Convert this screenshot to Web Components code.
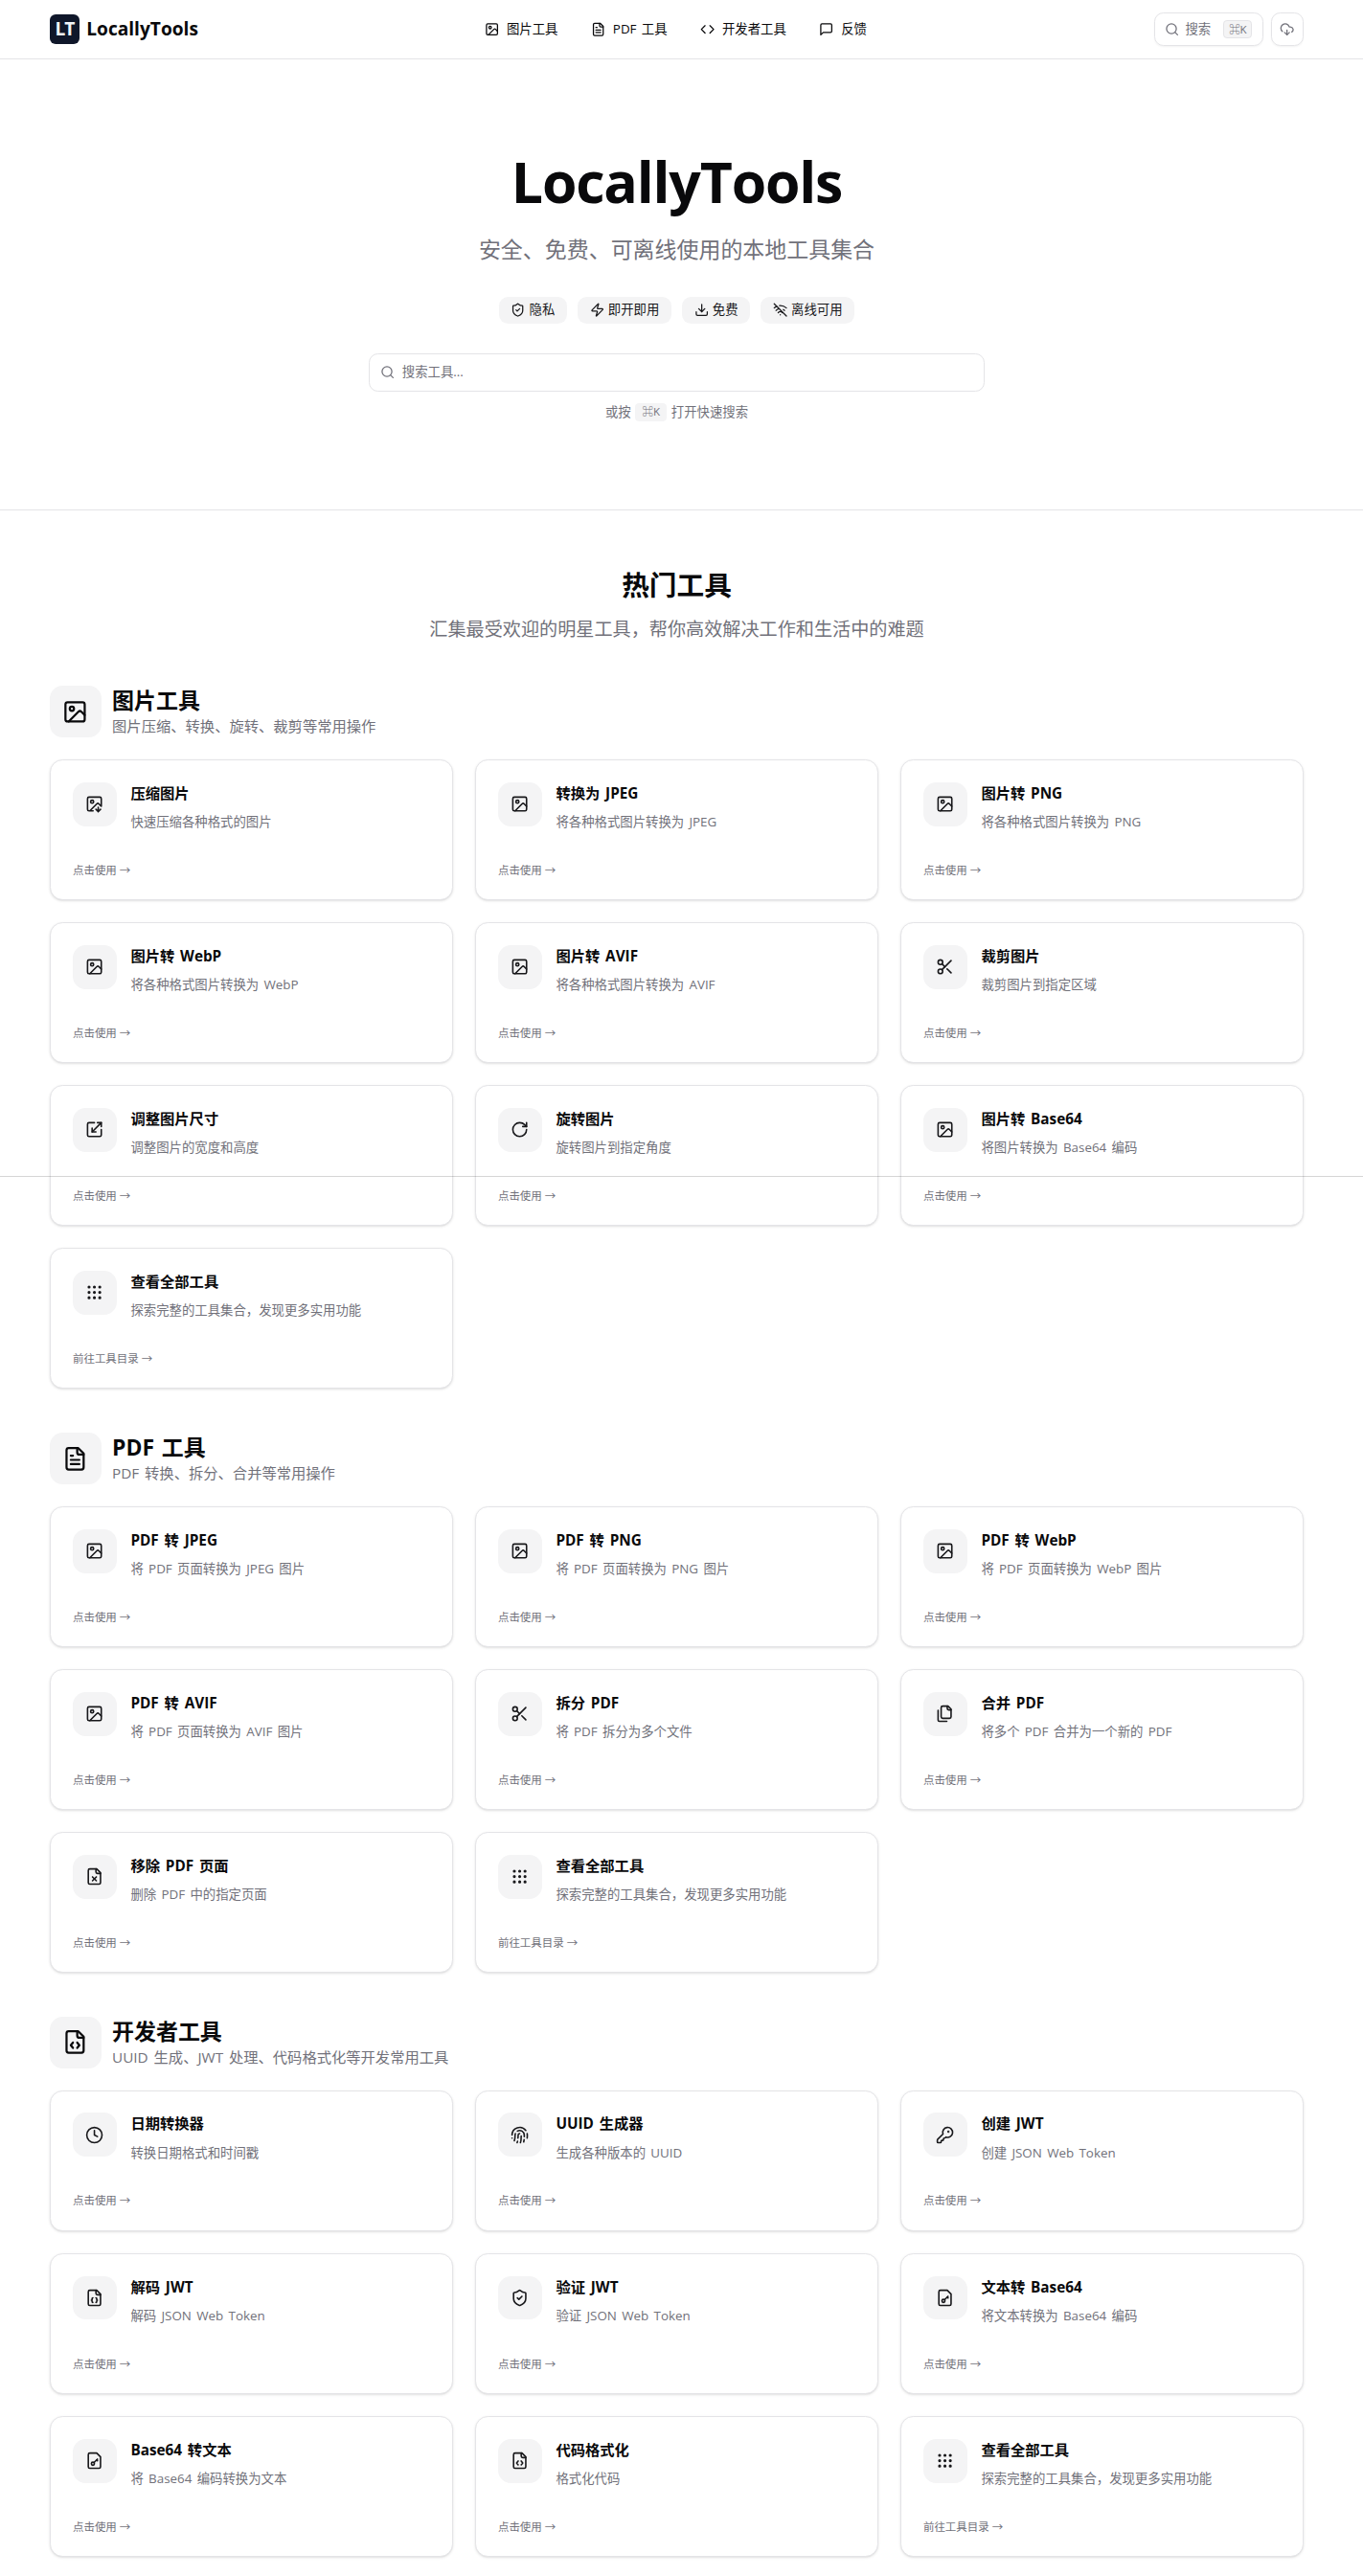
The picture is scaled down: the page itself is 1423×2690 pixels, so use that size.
<!DOCTYPE html>
<html lang="zh-CN">
<head>
<meta charset="utf-8">
<title>LocallyTools</title>
<style>
    html { font-size: 15.31px; }
    body {
        margin: 0;
        position: relative;
        background: #fff;
        color: #09090b;
        font-family: "Open Sans", "Noto Sans CJK SC", sans-serif;
        line-height: 1.5;
        word-spacing: .12em;
        --border: #e4e4e7;
        --muted: #f4f4f5;
        --muted-text: #71717a;
        --gutter: 10px;
    }
</style>
</head>
<body>
<site-header></site-header>
<site-hero></site-hero>
<tool-sections></tool-sections>
<seam-line></seam-line>

<script>
const FILE = '<path d="M15 2H6a2 2 0 0 0-2 2v16a2 2 0 0 0 2 2h12a2 2 0 0 0 2-2V7Z"/>'
const FOLD = '<path d="M14 2v4a2 2 0 0 0 2 2h4"/>'

const ICONS = {
    image: '<rect width="18" height="18" x="3" y="3" rx="2"/><circle cx="9" cy="9" r="2"/><path d="m21 15-3.086-3.086a2 2 0 0 0-2.828 0L6 21"/>',
    imageDown: '<path d="M10.3 21H5a2 2 0 0 1-2-2V5a2 2 0 0 1 2-2h14a2 2 0 0 1 2 2v10l-3.1-3.1a2 2 0 0 0-2.814.014L6 21"/><path d="m14 19 3 3v-5.5"/><path d="m17 22 3-3"/><circle cx="9" cy="9" r="2"/>',
    fileText: FILE + FOLD + '<path d="M10 9H8"/><path d="M16 13H8"/><path d="M16 17H8"/>',
    code: '<path d="m16 18 6-6-6-6"/><path d="m8 6-6 6 6 6"/>',
    message: '<path d="M21 15a2 2 0 0 1-2 2H7l-4 4V5a2 2 0 0 1 2-2h14a2 2 0 0 1 2 2z"/>',
    search: '<circle cx="11" cy="11" r="8"/><path d="m21 21-4.3-4.3"/>',
    cloud: '<path d="M12 13v8l-4-4"/><path d="m12 21 4-4"/><path d="M4.393 15.269A7 7 0 1 1 15.71 8h1.79a4.5 4.5 0 0 1 2.436 8.284"/>',
    shield: '<path d="M20 13c0 5-3.5 7.5-7.66 8.95a1 1 0 0 1-.67-.01C7.5 20.5 4 18 4 13V6a1 1 0 0 1 1-1c2 0 4.5-1.2 6.24-2.72a1.17 1.17 0 0 1 1.52 0C14.51 3.81 17 5 19 5a1 1 0 0 1 1 1z"/><path d="m9 12 2 2 4-4"/>',
    zap: '<path d="M4 14a1 1 0 0 1-.78-1.63l9.9-10.2a.5.5 0 0 1 .86.46l-1.92 6.02A1 1 0 0 0 13 10h7a1 1 0 0 1 .78 1.63l-9.9 10.2a.5.5 0 0 1-.86-.46l1.92-6.02A1 1 0 0 0 11 14z"/>',
    download: '<path d="M21 15v4a2 2 0 0 1-2 2H5a2 2 0 0 1-2-2v-4"/><path d="m7 10 5 5 5-5"/><path d="M12 15V3"/>',
    wifiOff: '<path d="M12 20h.01"/><path d="M8.5 16.429a5 5 0 0 1 7 0"/><path d="M5 12.859a10 10 0 0 1 5.17-2.69"/><path d="M19 12.859a10 10 0 0 0-2.007-1.523"/><path d="M2 8.82a15 15 0 0 1 4.177-2.643"/><path d="M22 8.82a15 15 0 0 0-11.288-3.764"/><path d="m2 2 20 20"/>',
    scissors: '<circle cx="6" cy="6" r="3"/><path d="M8.12 8.12 12 12"/><path d="M20 4 8.12 15.88"/><circle cx="6" cy="18" r="3"/><path d="M14.8 14.8 20 20"/>',
    scaling: '<path d="M12 3H5a2 2 0 0 0-2 2v14a2 2 0 0 0 2 2h14a2 2 0 0 0 2-2v-7"/><path d="M14 15H9v-5"/><path d="M16 3h5v5"/><path d="M21 3 9 15"/>',
    rotate: '<path d="M21 12a9 9 0 1 1-9-9c2.52 0 4.93 1 6.74 2.74L21 8"/><path d="M21 3v5h-5"/>',
    grip: [5, 12, 19].map(y => [5, 12, 19].map(x => `<circle cx="${x}" cy="${y}" r="1"/>`).join('')).join(''),
    files: '<path d="M20 7h-3a2 2 0 0 1-2-2V2"/><path d="M9 18a2 2 0 0 1-2-2V4a2 2 0 0 1 2-2h7l4 4v10a2 2 0 0 1-2 2Z"/><path d="M3 7.6v12.8A1.6 1.6 0 0 0 4.6 22h9.8"/>',
    fileX: FILE + FOLD + '<path d="m14.5 12.5-5 5"/><path d="m9.5 12.5 5 5"/>',
    fileCode: FILE + FOLD + '<path d="M10 12.5 8 15l2 2.5"/><path d="m14 12.5 2 2.5-2 2.5"/>',
    fileJson: FILE + FOLD + '<path d="M10 12a1 1 0 0 0-1 1v1a1 1 0 0 1-1 1 1 1 0 0 1 1 1v1a1 1 0 0 0 1 1"/><path d="M14 18a1 1 0 0 0 1-1v-1a1 1 0 0 1 1-1 1 1 0 0 1-1-1v-1a1 1 0 0 0-1-1"/>',
    fileKey: FILE + '<circle cx="10" cy="16" r="2"/><path d="m16 10-4.5 4.5"/><path d="m15 11 1 1"/>',
    clock: '<circle cx="12" cy="12" r="10"/><path d="M12 6v6l4 2"/>',
    fingerprint: '<path d="M12 10a2 2 0 0 0-2 2c0 1.02-.1 2.51-.26 4"/><path d="M14 13.12c0 2.38 0 6.38-1 8.88"/><path d="M17.29 21.02c.12-.6.43-2.3.5-3.02"/><path d="M2 12a10 10 0 0 1 18-6"/><path d="M2 16h.01"/><path d="M21.8 16c.2-2 .131-5.354 0-6"/><path d="M5 19.5C5.5 18 6 15 6 12a6 6 0 0 1 .34-2"/><path d="M8.65 22c.21-.66.45-1.32.57-2"/><path d="M9 6.8a6 6 0 0 1 9 5.2v2"/>',
    key: '<path d="M2.586 17.414A2 2 0 0 0 2 18.828V21a1 1 0 0 0 1 1h3a1 1 0 0 0 1-1v-1a1 1 0 0 1 1-1h1a1 1 0 0 0 1-1v-1a1 1 0 0 1 1-1h.172a2 2 0 0 0 1.414-.586l.814-.814a6.5 6.5 0 1 0-4-4z"/><circle cx="16.5" cy="7.5" r=".5" fill="currentColor"/>'
}

const SECTIONS = [
    {
        icon: 'image', title: '图片工具', text: '图片压缩、转换、旋转、裁剪等常用操作',
        tools: [
            ['imageDown', '压缩图片', '快速压缩各种格式的图片'],
            ['image', '转换为 JPEG', '将各种格式图片转换为 JPEG'],
            ['image', '图片转 PNG', '将各种格式图片转换为 PNG'],
            ['image', '图片转 WebP', '将各种格式图片转换为 WebP'],
            ['image', '图片转 AVIF', '将各种格式图片转换为 AVIF'],
            ['scissors', '裁剪图片', '裁剪图片到指定区域'],
            ['scaling', '调整图片尺寸', '调整图片的宽度和高度'],
            ['rotate', '旋转图片', '旋转图片到指定角度'],
            ['image', '图片转 Base64', '将图片转换为 Base64 编码']
        ]
    },
    {
        icon: 'fileText', title: 'PDF 工具', text: 'PDF 转换、拆分、合并等常用操作',
        tools: [
            ['image', 'PDF 转 JPEG', '将 PDF 页面转换为 JPEG 图片'],
            ['image', 'PDF 转 PNG', '将 PDF 页面转换为 PNG 图片'],
            ['image', 'PDF 转 WebP', '将 PDF 页面转换为 WebP 图片'],
            ['image', 'PDF 转 AVIF', '将 PDF 页面转换为 AVIF 图片'],
            ['scissors', '拆分 PDF', '将 PDF 拆分为多个文件'],
            ['files', '合并 PDF', '将多个 PDF 合并为一个新的 PDF'],
            ['fileX', '移除 PDF 页面', '删除 PDF 中的指定页面']
        ]
    },
    {
        icon: 'fileCode', title: '开发者工具', text: 'UUID 生成、JWT 处理、代码格式化等开发常用工具',
        tools: [
            ['clock', '日期转换器', '转换日期格式和时间戳'],
            ['fingerprint', 'UUID 生成器', '生成各种版本的 UUID'],
            ['key', '创建 JWT', '创建 JSON Web Token'],
            ['fileJson', '解码 JWT', '解码 JSON Web Token'],
            ['shield', '验证 JWT', '验证 JSON Web Token'],
            ['fileKey', '文本转 Base64', '将文本转换为 Base64 编码'],
            ['fileKey', 'Base64 转文本', '将 Base64 编码转换为文本'],
            ['fileCode', '代码格式化', '格式化代码']
        ]
    }
]

// Base class: puts the element's template in an open shadow root
class BaseElement extends HTMLElement {
    connectedCallback() {
        if(this.shadowRoot) return;
        this.attachShadow({ mode: 'open' });
        const template = document.createElement('template');
        template.innerHTML = this.render();
        this.shadowRoot.appendChild(template.content);
    }
}

class AppIcon extends BaseElement {
    render() {
        return `
            <style>
                :host { display: block; flex: none; width: 1rem; height: 1rem; }
                svg { display: block; width: 100%; height: 100%; }
            </style>
            <svg viewBox="0 0 24 24" fill="none" stroke="currentColor" stroke-width="2" stroke-linecap="round" stroke-linejoin="round">${ICONS[this.getAttribute('name')]}</svg>`;
    }
}

class KeyHint extends BaseElement {
    render() {
        return `
            <style>
                :host {
                    display: inline-flex;
                    align-items: center;
                    justify-content: center;
                    box-sizing: border-box;
                    height: 1.25rem;
                    padding: 0 .3125rem;
                    border: 1px solid var(--kbd-border, var(--border));
                    border-radius: .25rem;
                    background: var(--muted);
                    color: var(--muted-text);
                    font-size: .75rem;
                    line-height: 1;
                }
            </style>
            <slot></slot>`;
    }
}

class NavLink extends BaseElement {
    render() {
        return `
            <style>
                :host {
                    display: flex;
                    align-items: center;
                    gap: .5rem;
                    font-size: .875rem;
                    line-height: 1.25rem;
                    white-space: nowrap;
                }
            </style>
            <app-icon name="${this.getAttribute('icon')}"></app-icon>
            <span><slot></slot></span>`;
    }
}

class SiteHeader extends BaseElement {
    render() {
        return `
            <style>
                :host {
                    display: block;
                    border-bottom: 1px solid var(--border);
                    padding-right: var(--gutter);
                }
                .bar {
                    display: grid;
                    grid-template-columns: 1fr auto 1fr;
                    align-items: center;
                    width: 1309px;
                    height: 61px;
                    margin: 0 auto;
                }
                .brand { display: flex; align-items: center; gap: .5rem; }
                .mark {
                    display: grid;
                    place-items: center;
                    width: 2rem;
                    height: 2rem;
                    border-radius: .4rem;
                    background: #0f172a;
                    color: #f1f5f9;
                    font-size: 1.25rem;
                    font-weight: 700;
                    line-height: 1;
                    letter-spacing: -.06em;
                }
                .name { font-size: 1.25rem; line-height: 1.75rem; font-weight: 700; }
                nav { display: flex; gap: 2.25rem; margin-right: 2px; }
                .actions { display: flex; justify-content: flex-end; gap: .5rem; color: var(--muted-text); }
                .button {
                    display: flex;
                    align-items: center;
                    justify-content: center;
                    box-sizing: border-box;
                    width: 2.25rem;
                    height: 2.25rem;
                    border: 1px solid var(--border);
                    border-radius: .625rem;
                    box-shadow: 0 1px 2px rgba(0, 0, 0, .05);
                    font-size: .875rem;
                }
                .search { width: 114px; justify-content: flex-start; gap: .375rem; padding: 0 .6875rem; }
                key-hint { margin-left: auto; }
            </style>
            <div class="bar">
                <div class="brand">
                    <span class="mark">LT</span>
                    <span class="name">LocallyTools</span>
                </div>
                <nav>
                    <nav-link icon="image">图片工具</nav-link>
                    <nav-link icon="fileText">PDF 工具</nav-link>
                    <nav-link icon="code">开发者工具</nav-link>
                    <nav-link icon="message">反馈</nav-link>
                </nav>
                <div class="actions">
                    <div class="button search">
                        <app-icon name="search"></app-icon>
                        <span>搜索</span>
                        <key-hint>⌘K</key-hint>
                    </div>
                    <div class="button"><app-icon name="cloud"></app-icon></div>
                </div>
            </div>`;
    }
}

class FeatureBadge extends BaseElement {
    render() {
        return `
            <style>
                :host {
                    display: flex;
                    align-items: center;
                    box-sizing: border-box;
                    gap: .25rem;
                    height: 1.875rem;
                    padding: 0 .8125rem;
                    border-radius: .625rem;
                    background: var(--muted);
                    color: #18181b;
                    font-size: .875rem;
                    line-height: 1.25rem;
                }
            </style>
            <app-icon name="${this.getAttribute('icon')}"></app-icon>
            <span><slot></slot></span>`;
    }
}

class SiteHero extends BaseElement {
    render() {
        return `
            <style>
                :host {
                    display: flex;
                    flex-direction: column;
                    align-items: center;
                    padding: 93px var(--gutter) 6rem 0;
                    border-bottom: 1px solid var(--border);
                    color: var(--muted-text);
                    font-size: .875rem;
                    line-height: 1.25rem;
                }
                h1 {
                    margin: 0 0 1.4rem;
                    color: #09090b;
                    font-size: 3.85rem;
                    line-height: 4.5rem;
                    font-weight: 700;
                    letter-spacing: -.02em;
                }
                p { margin: 0; font-size: 1.5rem; line-height: 2rem; }
                .badges { display: flex; gap: .75rem; margin: 2.2rem 0 2rem; }
                .field {
                    display: flex;
                    align-items: center;
                    gap: .46rem;
                    box-sizing: border-box;
                    width: 643px;
                    height: 2.625rem;
                    padding: 0 .75rem;
                    border: 1px solid var(--border);
                    border-radius: .625rem;
                }
                .hint { display: flex; align-items: center; gap: .3rem; margin-top: .75rem; }
                .hint key-hint { --kbd-border: var(--muted); box-sizing: border-box; width: 33px; }
            </style>
            <h1>LocallyTools</h1>
            <p>安全、免费、可离线使用的本地工具集合</p>
            <div class="badges">
                <feature-badge icon="shield">隐私</feature-badge>
                <feature-badge icon="zap">即开即用</feature-badge>
                <feature-badge icon="download">免费</feature-badge>
                <feature-badge icon="wifiOff">离线可用</feature-badge>
            </div>
            <div class="field"><app-icon name="search"></app-icon><span>搜索工具...</span></div>
            <div class="hint"><span>或按</span><key-hint>⌘K</key-hint><span>打开快速搜索</span></div>`;
    }
}

class ToolCard extends BaseElement {
    render() {
        return `
            <style>
                :host {
                    display: block;
                    box-sizing: border-box;
                    height: 147.15px;
                    padding: 1.5rem;
                    border: 1px solid var(--border);
                    border-radius: .875rem;
                    background: #fff;
                    box-shadow: 0 1px 3px rgba(0, 0, 0, .1), 0 1px 2px -1px rgba(0, 0, 0, .1);
                }
                .top { display: flex; gap: .95rem; }
                .icon {
                    display: grid;
                    place-items: center;
                    flex: none;
                    width: 3rem;
                    height: 3rem;
                    border-radius: .875rem;
                    background: var(--muted);
                    color: #18181b;
                }
                app-icon { width: 1.25rem; height: 1.25rem; }
                h4 { margin: 0 0 .54rem; font-size: 1rem; line-height: 1.5625rem; font-weight: 700; }
                p { margin: 0; font-size: .875rem; line-height: 1.25rem; color: var(--muted-text); }
                .more { margin-top: 2.13rem; font-size: .75rem; line-height: 1rem; color: var(--muted-text); word-spacing: 0; }
            </style>
            <div class="top">
                <div class="icon"><app-icon name="${this.getAttribute('icon')}"></app-icon></div>
                <div>
                    <h4><slot name="title"></slot></h4>
                    <p><slot></slot></p>
                </div>
            </div>
            <div class="more">${this.getAttribute('more') || '点击使用'} →</div>`;
    }
}

class ToolCategory extends BaseElement {
    render() {
        return `
            <style>
                :host { display: block; }
                header { display: flex; gap: .75rem; margin-bottom: 1.5rem; }
                .icon {
                    display: grid;
                    place-items: center;
                    width: 3.5rem;
                    height: 3.5rem;
                    border-radius: .875rem;
                    background: var(--muted);
                }
                .icon app-icon { width: 1.75rem; height: 1.75rem; }
                h3 { margin: 0; font-size: 1.5rem; line-height: 2rem; font-weight: 700; }
                p { margin: 0; font-size: 1rem; line-height: 1.5rem; color: var(--muted-text); }
                .grid { display: grid; grid-template-columns: repeat(3, 1fr); gap: 1.5rem; }
            </style>
            <header>
                <div class="icon"><app-icon name="${this.getAttribute('icon')}"></app-icon></div>
                <div>
                    <h3><slot name="title"></slot></h3>
                    <p><slot name="text"></slot></p>
                </div>
            </header>
            <div class="grid"><slot></slot></div>`;
    }
}

class ToolSections extends BaseElement {
    renderCard(tool, more = '') {
        return `<tool-card icon="${tool[0]}" more="${more}"><span slot="title">${tool[1]}</span>${tool[2]}</tool-card>`;
    }

    render() {
        const sections = SECTIONS.map(section => `
            <tool-category icon="${section.icon}">
                <span slot="title">${section.title}</span>
                <span slot="text">${section.text}</span>
                ${section.tools.map(tool => this.renderCard(tool)).join('')}
                ${this.renderCard(['grip', '查看全部工具', '探索完整的工具集合，发现更多实用功能'], '前往工具目录')}
            </tool-category>`).join('');

        return `
            <style>
                :host {
                    display: block;
                    box-sizing: border-box;
                    padding: 4rem var(--gutter) 19px 0;
                }
                .intro { text-align: center; }
                h2 { margin: 0 0 1rem; font-size: 1.875rem; line-height: 2.25rem; font-weight: 700; }
                p { margin: 0 0 3rem; font-size: 1.25rem; line-height: 1.75rem; color: var(--muted-text); }
                .list {
                    display: flex;
                    flex-direction: column;
                    gap: 3rem;
                    width: 1309px;
                    margin: 0 auto;
                }
            </style>
            <div class="intro">
                <h2>热门工具</h2>
                <p>汇集最受欢迎的明星工具，帮你高效解决工作和生活中的难题</p>
            </div>
            <div class="list">${sections}</div>`;
    }
}

// Hairline that runs across the page, over the cards
class SeamLine extends BaseElement {
    render() {
        return `
            <style>
                :host {
                    display: block;
                    position: absolute;
                    top: 1228px;
                    left: 0;
                    right: 0;
                    height: 1px;
                    background: rgba(0, 0, 0, .16);
                }
            </style>`;
    }
}

customElements.define('app-icon', AppIcon);
customElements.define('key-hint', KeyHint);
customElements.define('nav-link', NavLink);
customElements.define('feature-badge', FeatureBadge);
customElements.define('tool-card', ToolCard);
customElements.define('tool-category', ToolCategory);
customElements.define('site-header', SiteHeader);
customElements.define('site-hero', SiteHero);
customElements.define('tool-sections', ToolSections);
customElements.define('seam-line', SeamLine);
</script>
</body>
</html>
